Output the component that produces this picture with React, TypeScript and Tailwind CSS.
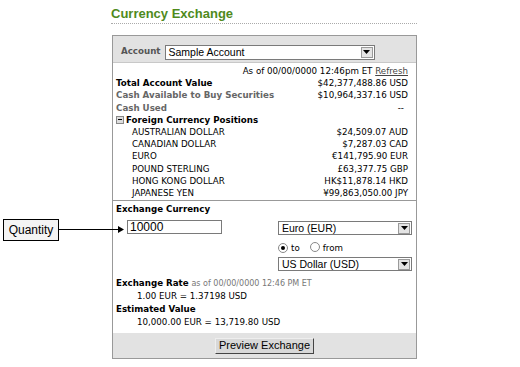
import React from "react";

const positions = [
  { name: "AUSTRALIAN DOLLAR", value: "$24,509.07 AUD" },
  { name: "CANADIAN DOLLAR", value: "$7,287.03 CAD" },
  { name: "EURO", value: "€141,795.90 EUR" },
  { name: "POUND STERLING", value: "£63,377.75 GBP" },
  { name: "HONG KONG DOLLAR", value: "HK$11,878.14 HKD" },
  { name: "JAPANESE YEN", value: "¥99,863,050.00 JPY" },
];

function SelectBox({ label, className }: { label: string; className: string }) {
  return (
    <div
      className={`flex items-center justify-between border border-[#7a7a7a] bg-white pl-[3px] pr-[1px] font-['Liberation_Sans',Arial,sans-serif] text-[10.5px] leading-none text-black ${className}`}
    >
      <span>{label}</span>
      <span className="flex h-[11px] w-[12px] items-center justify-center border border-[#9a9a9a] bg-[#e4e4e4]">
        <svg width="7" height="4" viewBox="0 0 7 4">
          <path d="M0 0h7L3.5 4z" fill="#000" />
        </svg>
      </span>
    </div>
  );
}

function Radio({ checked }: { checked?: boolean }) {
  return (
    <span className="mr-[3px] inline-flex h-[10px] w-[10px] items-center justify-center rounded-full border border-[#888] bg-white">
      {checked && <span className="h-[4px] w-[4px] rounded-full bg-black" />}
    </span>
  );
}

export default function App() {
  return (
    <div className="relative h-[367px] w-[520px] bg-white font-['DejaVu_Sans',Verdana,sans-serif] text-[8.7px] text-black">
      {/* callout */}
      <div className="absolute left-[3px] top-[219px] flex h-[22px] w-[56px] items-center justify-center border border-black bg-[#f4f4f4] font-['Liberation_Sans',Arial,sans-serif] text-[12px]">
        Quantity
      </div>
      <div className="absolute left-[59px] top-[229px] h-px w-[60px] bg-black" />
      <svg className="absolute left-[118px] top-[226px]" width="6" height="7" viewBox="0 0 6 7">
        <path d="M0 0L6 3.5L0 7z" fill="#000" />
      </svg>

      <div className="ml-[111px] w-[306px] pt-[6px]">
        <div className="border-b border-dotted border-[#aaa] pb-[2px] font-['Liberation_Sans',Arial,sans-serif] text-[13px] font-bold leading-[15px] text-[#4f8a1c]">
          Currency Exchange
        </div>

        <div className="mt-[11px] ml-px border border-[#999]">
          <div className="flex h-[27px] items-center gap-[4px] border-b border-[#c8c8c8] bg-[#e2e2e2] pt-[6px] pl-[8px]">
            <span className="font-bold text-[#555]">Account</span>
            <SelectBox label="Sample Account" className="h-[15px] w-[210px]" />
          </div>

          <div className="px-[3px] pb-px pt-[2px] leading-[12.2px]">
            <div className="pr-[5px] text-right">
              As of 00/00/0000 12:46pm ET <span className="underline text-[#444]">Refresh</span>
            </div>
            <div className="flex justify-between pr-[5px] font-bold">
              <span>Total Account Value</span>
              <span className="font-normal">$42,377,488.86 USD</span>
            </div>
            <div className="flex justify-between pr-[5px]">
              <span className="font-bold text-[#666]">Cash Available to Buy Securities</span>
              <span>$10,964,337.16 USD</span>
            </div>
            <div className="flex justify-between pr-[5px]">
              <span className="font-bold text-[#666]">Cash Used</span>
              <span className="pr-[4px]">--</span>
            </div>
            <div className="flex items-center gap-[2px] font-bold">
              <span className="flex h-[8px] w-[8px] items-center justify-center border border-[#888] bg-[#ddd]">
                <span className="h-px w-[4px] bg-black" />
              </span>
              <span>Foreign Currency Positions</span>
            </div>
            {positions.map((p) => (
              <div key={p.name} className="flex justify-between pl-[16px] pr-[5px]">
                <span>{p.name}</span>
                <span>{p.value}</span>
              </div>
            ))}
          </div>

          <div className="border-t border-[#999] px-[3px] pt-[2px] leading-[12.2px]">
            <div className="font-bold">Exchange Currency</div>
            <div className="mt-[5px] flex">
              <div className="ml-[11px] flex h-[14px] w-[95px] items-center border border-[#7a7a7a] pl-[2px] font-['Liberation_Sans',Arial,sans-serif] text-[12px]">
                10000
              </div>
              <div className="ml-[56px] mt-px flex flex-col">
                <SelectBox label="Euro (EUR)" className="h-[14px] w-[134px]" />
                <div className="mt-[7px] flex h-[12px] items-center">
                  <Radio checked />
                  <span>to</span>
                  <span className="ml-[10px]">
                    <Radio />
                  </span>
                  <span>from</span>
                </div>
                <SelectBox label="US Dollar (USD)" className="mt-[3px] h-[14px] w-[134px]" />
              </div>
            </div>

            <div className="mt-[6px] leading-[13px]">
              <div>
                <span className="font-bold">Exchange Rate</span>{" "}
                <span className="text-[8px] text-[#777]">as of 00/00/0000 12:46 PM ET</span>
              </div>
              <div className="pl-[21px]">1.00 EUR = 1.37198 USD</div>
              <div className="font-bold">Estimated Value</div>
              <div className="pl-[21px]">10,000.00 EUR = 13,719.80 USD</div>
            </div>
          </div>

          <div className="mt-[4px] flex h-[25px] items-center justify-center bg-[#e2e2e2]">
            <button className="h-[16px] w-[99px] whitespace-nowrap border border-t-[#eee] border-l-[#eee] border-r-[#444] border-b-[#444] bg-[#d8d8d8] px-0 font-['Liberation_Sans',Arial,sans-serif] text-[11px] leading-none">
              Preview Exchange
            </button>
          </div>
        </div>
      </div>
    </div>
  );
}
